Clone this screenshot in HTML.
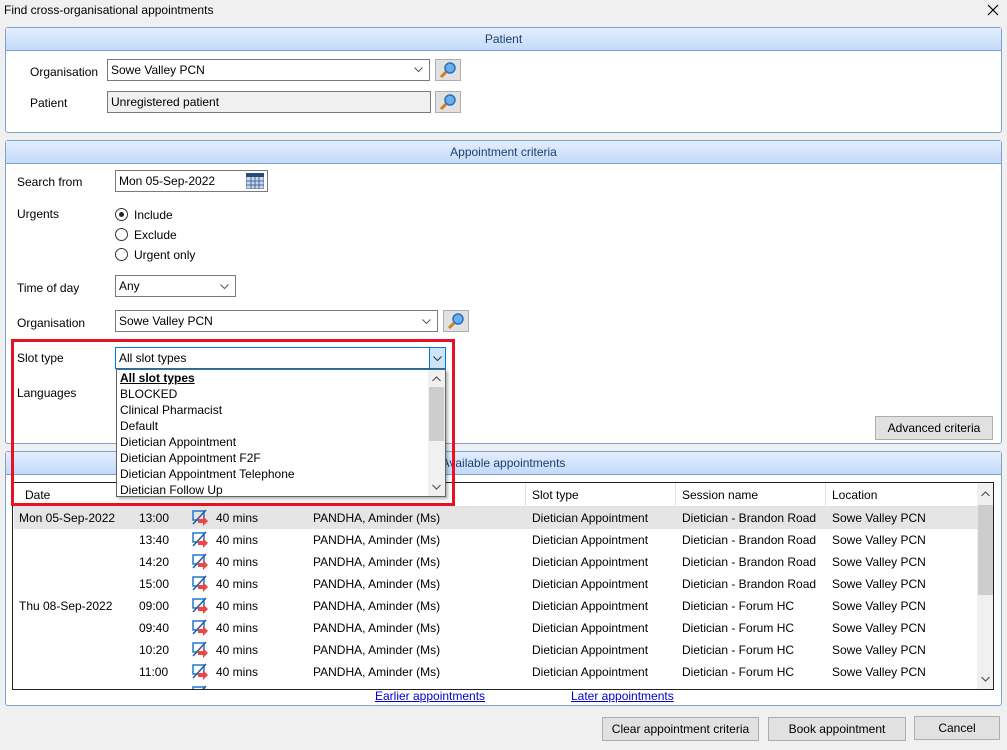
<!DOCTYPE html>
<html><head><meta charset="utf-8"><style>
*{box-sizing:border-box}
body{margin:0;width:1007px;height:750px;background:#f0f0f0;font-family:"Liberation Sans",Arial,sans-serif;font-size:12px;color:#000;position:relative;overflow:hidden}
.a{position:absolute;white-space:nowrap}
.panel{position:absolute;border:1px solid #7da2ce;border-radius:3px;background:#fff}
.ph{position:absolute;left:0;right:0;top:0;height:23px;background:linear-gradient(#e3eefc,#c3dafa);border-bottom:1px solid #7da2ce;text-align:center;line-height:23px;color:#1e3f6e}
.box{position:absolute;border:1px solid #7a7a7a;background:#fff;height:22px;line-height:20px;padding-left:3px}
.btn{position:absolute;border:1px solid #adadad;background:#e1e1e1;text-align:center;line-height:22px;height:24px}
.mag{position:absolute;width:26px;height:22px;border:1px solid #adadad;background:#e1e1e1}
.chev{position:absolute;right:6px;top:0;}
.radio{position:absolute;width:13px;height:13px;border:1px solid #333;border-radius:50%;background:#fff}
.row{position:absolute;left:1px;width:964px;height:22px;line-height:22px}
.row span{position:absolute}
a{color:#00c;text-decoration:underline}
</style></head><body>
<div class="a" style="left:4px;top:3px;font-size:12px">Find cross-organisational appointments</div>
<svg style="position:absolute;left:987px;top:4px" width="12" height="12"><path d="M1 1L11 11M11 1L1 11" stroke="#000" stroke-width="1.2"/></svg>

<!-- Patient panel -->
<div class="panel" style="left:5px;top:27px;width:997px;height:106px">
 <div class="ph">Patient</div>
</div>
<div class="a" style="left:30px;top:65px">Organisation</div>
<div class="box" style="left:107px;top:59px;width:323px">Sowe Valley PCN<svg class="chev" style="top:7px" width="9" height="6"><path d="M0.5 0.5L4.5 4.5L8.5 0.5" fill="none" stroke="#555"/></svg></div>
<div class="mag" style="left:435px;top:59px"><svg width="24" height="20"><circle cx="14" cy="8" r="5" fill="#6ab0f0" stroke="#2a6fc0" stroke-width="1.5"/><line x1="10" y1="12" x2="5" y2="17" stroke="#d08020" stroke-width="3"/></svg></div>
<div class="a" style="left:30px;top:96px">Patient</div>
<div class="box" style="left:107px;top:91px;width:324px;background:#f0f0f0">Unregistered patient</div>
<div class="mag" style="left:435px;top:91px"><svg width="24" height="20"><circle cx="14" cy="8" r="5" fill="#6ab0f0" stroke="#2a6fc0" stroke-width="1.5"/><line x1="10" y1="12" x2="5" y2="17" stroke="#d08020" stroke-width="3"/></svg></div>

<!-- Appointment criteria -->
<div class="panel" style="left:5px;top:140px;width:997px;height:304px">
 <div class="ph">Appointment criteria</div>
</div>
<div class="a" style="left:17px;top:175px">Search from</div>
<div class="box" style="left:115px;top:170px;width:153px">Mon 05-Sep-2022
 <svg style="position:absolute;right:3px;top:2px" width="18" height="16"><rect x="0" y="0" width="18" height="16" fill="#c8d8ec" stroke="#4a6a9a"/><rect x="0" y="0" width="18" height="4" fill="#2a4a7a"/><path d="M0 8H18M0 12H18M5 4V16M9 4V16M13 4V16" stroke="#4a6a9a"/></svg></div>
<div class="a" style="left:17px;top:207px">Urgents</div>
<div class="radio" style="left:115px;top:208px"><div style="position:absolute;left:3px;top:3px;width:5px;height:5px;border-radius:50%;background:#222"></div></div>
<div class="a" style="left:134px;top:208px">Include</div>
<div class="radio" style="left:115px;top:228px"></div><div class="a" style="left:134px;top:228px">Exclude</div>
<div class="radio" style="left:115px;top:248px"></div><div class="a" style="left:134px;top:248px">Urgent only</div>
<div class="a" style="left:17px;top:281px">Time of day</div>
<div class="box" style="left:115px;top:275px;width:121px">Any<svg class="chev" style="top:8px" width="9" height="6"><path d="M0.5 0.5L4.5 4.5L8.5 0.5" fill="none" stroke="#555"/></svg></div>
<div class="a" style="left:17px;top:316px">Organisation</div>
<div class="box" style="left:115px;top:310px;width:323px">Sowe Valley PCN<svg class="chev" style="top:8px" width="9" height="6"><path d="M0.5 0.5L4.5 4.5L8.5 0.5" fill="none" stroke="#555"/></svg></div>
<div class="mag" style="left:443px;top:310px"><svg width="24" height="20"><circle cx="14" cy="8" r="5" fill="#6ab0f0" stroke="#2a6fc0" stroke-width="1.5"/><line x1="10" y1="12" x2="5" y2="17" stroke="#d08020" stroke-width="3"/></svg></div>
<div class="a" style="left:17px;top:351px">Slot type</div>
<div class="a" style="left:17px;top:386px">Languages</div>
<div class="btn" style="left:875px;top:416px;width:118px">Advanced criteria</div>

<!-- Available appointments -->
<div class="panel" style="left:5px;top:451px;width:997px;height:255px">
 <div class="ph">Available appointments</div>
</div>
<div style="position:absolute;left:12px;top:482px;width:982px;height:208px;border:1px solid #222;background:#fff;overflow:hidden">
 <div style="position:absolute;left:0;top:0;width:964px;height:24px;border-bottom:1px solid #e0e0e0">
  <span class="a" style="left:12px;top:5px">Date</span>
  <span class="a" style="left:519px;top:5px">Slot type</span>
  <span class="a" style="left:669px;top:5px">Session name</span>
  <span class="a" style="left:819px;top:5px">Location</span>
  <div style="position:absolute;left:512px;top:0;width:1px;height:24px;background:#e0e0e0"></div>
  <div style="position:absolute;left:662px;top:0;width:1px;height:24px;background:#e0e0e0"></div>
  <div style="position:absolute;left:812px;top:0;width:1px;height:24px;background:#e0e0e0"></div>
 </div>
 <div style="position:absolute;left:964px;top:0;width:17px;height:206px;background:#f0f0f0">
  <svg style="position:absolute;left:4px;top:8px" width="9" height="6"><path d="M0.5 5L4.5 1L8.5 5" fill="none" stroke="#555" stroke-width="1.2"/></svg>
  <div style="position:absolute;left:1px;top:22px;width:15px;height:90px;background:#cdcdcd"></div>
  <svg style="position:absolute;left:4px;top:193px" width="9" height="6"><path d="M0.5 1L4.5 5L8.5 1" fill="none" stroke="#555" stroke-width="1.2"/></svg>
 </div>
 <div id="rows"></div>
</div>
<div class="a" style="left:375px;top:689px"><a>Earlier appointments</a></div>
<div class="a" style="left:571px;top:689px"><a>Later appointments</a></div>

<div class="btn" style="left:602px;top:717px;width:157px">Clear appointment criteria</div>
<div class="btn" style="left:768px;top:717px;width:138px">Book appointment</div>
<div class="btn" style="left:914px;top:716px;width:86px">Cancel</div>

<!-- dropdown -->
<div class="box" style="left:115px;top:347px;width:331px;border-color:#0078d7">All slot types<span style="position:absolute;right:0;top:0;width:16px;height:20px;background:#cce4f7;border-left:1px solid #0078d7"><svg style="position:absolute;left:3px;top:8px" width="9" height="6"><path d="M0.5 0.5L4.5 4.5L8.5 0.5" fill="none" stroke="#333"/></svg></span></div>
<div style="position:absolute;left:116px;top:369px;width:330px;height:128px;border:1px solid #646464;background:#fff;box-shadow:2px 2px 3px rgba(0,0,0,.3);line-height:16px;padding-top:0">
 <div style="padding-left:3px;font-weight:bold;text-decoration:underline">All slot types</div>
 <div style="padding-left:3px">BLOCKED</div>
 <div style="padding-left:3px">Clinical Pharmacist</div>
 <div style="padding-left:3px">Default</div>
 <div style="padding-left:3px">Dietician Appointment</div>
 <div style="padding-left:3px">Dietician Appointment F2F</div>
 <div style="padding-left:3px">Dietician Appointment Telephone</div>
 <div style="padding-left:3px">Dietician Follow Up</div>
 <div style="position:absolute;right:0;top:0;width:17px;height:126px;background:#f0f0f0">
  <div style="position:absolute;left:1px;top:17px;width:15px;height:54px;background:#cdcdcd"></div>
  <svg style="position:absolute;left:4px;top:6px" width="9" height="6"><path d="M0.5 5L4.5 1L8.5 5" fill="none" stroke="#555" stroke-width="1.2"/></svg>
  <svg style="position:absolute;left:4px;top:114px" width="9" height="6"><path d="M0.5 1L4.5 5L8.5 1" fill="none" stroke="#555" stroke-width="1.2"/></svg>
 </div>
</div>
<div style="position:absolute;left:11px;top:339px;width:444px;height:167px;border:3px solid #e81123"></div>

<script>
var d=[["Mon 05-Sep-2022","13:00","Brandon Road"],["","13:40","Brandon Road"],["","14:20","Brandon Road"],["","15:00","Brandon Road"],["Thu 08-Sep-2022","09:00","Forum HC"],["","09:40","Forum HC"],["","10:20","Forum HC"],["","11:00","Forum HC"],["","",""]];
var ic='<svg width="18" height="18" style="position:absolute;left:0;top:2px"><rect x="2" y="2" width="11" height="9" fill="none" stroke="#1e78d0" stroke-width="1.5"/><line x1="2" y1="15" x2="15" y2="1" stroke="#1e5aa0" stroke-width="1.5"/><path d="M7 10h5v-3l5 5-5 5v-3h-5z" fill="#e84848"/></svg>';
var h='';
d.forEach(function(r,i){
 var t=24+i*22;
 if(i==8){h+='<div class="row" style="top:'+t+'px"><span style="left:177px">'+ic+'</span></div>';return;}
 h+='<div class="row" style="top:'+t+'px;'+(i==0?'background:#e5e5e5':'')+'"><span style="left:5px">'+r[0]+'</span><span style="left:125px">'+r[1]+'</span><span style="left:177px;width:20px;height:22px">'+ic+'</span><span style="left:202px">40 mins</span><span style="left:299px">PANDHA, Aminder (Ms)</span><span style="left:518px">Dietician Appointment</span><span style="left:668px">Dietician - '+r[2]+'</span><span style="left:818px">Sowe Valley PCN</span></div>';
});
document.getElementById('rows').innerHTML=h;
</script>
</body></html>
